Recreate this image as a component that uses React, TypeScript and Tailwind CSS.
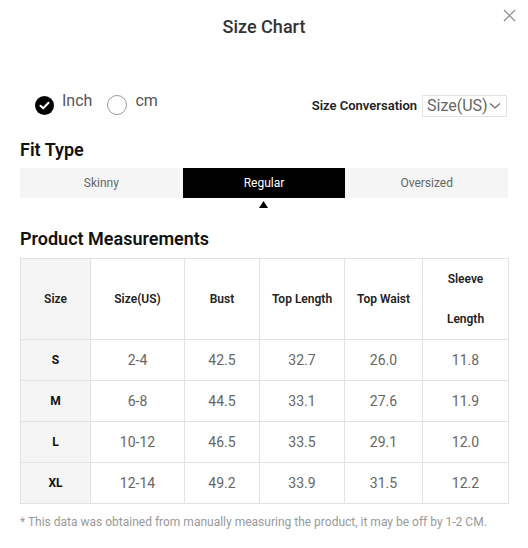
import React, { useState } from "react";

const rows = [
  { size: "S", us: "2-4", bust: "42.5", length: "32.7", waist: "26.0", sleeve: "11.8" },
  { size: "M", us: "6-8", bust: "44.5", length: "33.1", waist: "27.6", sleeve: "11.9" },
  { size: "L", us: "10-12", bust: "46.5", length: "33.5", waist: "29.1", sleeve: "12.0" },
  { size: "XL", us: "12-14", bust: "49.2", length: "33.9", waist: "31.5", sleeve: "12.2" },
];

const fitTypes = ["Skinny", "Regular", "Oversized"];

export default function App() {
  const [unit, setUnit] = useState<"inch" | "cm">("inch");
  const [fit, setFit] = useState("Regular");

  return (
    <div className="relative w-[528px] h-[548px] bg-white font-['Roboto',sans-serif] text-[#333]">
      {/* header */}
      <h1 className="pt-[15px] text-center text-[18px] leading-[24px] font-medium text-[#333]">
        Size Chart
      </h1>
      <button type="button" className="absolute right-[12px] top-[9px] text-[#888]">
        <svg width="13" height="13" viewBox="0 0 13 13" fill="none" stroke="currentColor" strokeWidth="1.2">
          <path d="M1 1L12 12M12 1L1 12" />
        </svg>
      </button>

      {/* unit + size conversation */}
      <div className="mt-[53px] h-[26px] flex items-center justify-between pl-[35px] pr-[21px]">
        <div className="flex items-center">
          <button type="button" className="flex items-center" onClick={() => setUnit("inch")}>
            {unit === "inch" ? <CheckedDot /> : <EmptyDot />}
            <span className="ml-[8px] -mt-[8px] text-[16px] leading-[16px] text-[#555]">Inch</span>
          </button>
          <button type="button" className="flex items-center ml-[15px]" onClick={() => setUnit("cm")}>
            {unit === "cm" ? <CheckedDot /> : <EmptyDot />}
            <span className="ml-[8px] -mt-[8px] text-[16px] leading-[16px] text-[#555]">cm</span>
          </button>
        </div>
        <div className="flex items-center mt-[2px]">
          <span className="text-[13px] font-semibold text-[#222]">Size Conversation</span>
          <div className="ml-[5px] h-[22px] w-[85px] border border-[#e3e3e3] flex items-center pl-[4px] text-[16px] text-[#666]">
            Size(US)
            <svg className="ml-[1px]" width="12" height="8" viewBox="0 0 12 8" fill="none" stroke="#666" strokeWidth="1.2">
              <path d="M1 1.5L6 6L11 1.5" />
            </svg>
          </div>
        </div>
      </div>

      {/* fit type */}
      <div className="px-[20px]">
        <h2 className="mt-[22px] text-[18px] leading-[20px] font-semibold text-[#111]">Fit Type</h2>
        <div className="mt-[8px] grid grid-cols-3 h-[30px] bg-[#f5f5f5]">
          {fitTypes.map((f) => (
            <button
              key={f}
              type="button"
              onClick={() => setFit(f)}
              className={
                f === fit
                  ? "bg-black text-white text-[12px]"
                  : "text-[#666] text-[12px]"
              }
            >
              {f}
            </button>
          ))}
        </div>
        <div className="grid grid-cols-3 mt-[3px] h-[7px]">
          {fitTypes.map((f) => (
            <div key={f} className="flex justify-center">
              {f === fit && (
                <svg width="9" height="7" viewBox="0 0 9 7">
                  <path d="M4.5 0L9 7H0Z" fill="#000" />
                </svg>
              )}
            </div>
          ))}
        </div>

        {/* measurements */}
        <h2 className="mt-[21px] text-[18px] leading-[20px] font-semibold text-[#111]">Product Measurements</h2>
        <table className="mt-[9px] w-[488px] border-collapse table-fixed text-center">
          <colgroup>
            <col className="w-[70px]" />
            <col className="w-[94px]" />
            <col className="w-[75px]" />
            <col className="w-[85px]" />
            <col className="w-[78px]" />
            <col className="w-[86px]" />
          </colgroup>
          <thead>
            <tr className="h-[81px] text-[12px] text-[#222]">
              <th className="border border-[#e2e2e2] bg-[#f5f5f5] font-semibold">Size</th>
              <th className="border border-[#e2e2e2] font-semibold">Size(US)</th>
              <th className="border border-[#e2e2e2] font-semibold">Bust</th>
              <th className="border border-[#e2e2e2] font-semibold">Top Length</th>
              <th className="border border-[#e2e2e2] font-semibold">Top Waist</th>
              <th className="border border-[#e2e2e2] font-semibold leading-[40px]">
                Sleeve
                <br />
                Length
              </th>
            </tr>
          </thead>
          <tbody>
            {rows.map((r) => (
              <tr key={r.size} className="h-[41px] text-[14px] text-[#666]">
                <td className="border border-[#e2e2e2] bg-[#f5f5f5] text-[12px] font-bold text-[#111]">{r.size}</td>
                <td className="border border-[#e2e2e2]">{r.us}</td>
                <td className="border border-[#e2e2e2]">{r.bust}</td>
                <td className="border border-[#e2e2e2]">{r.length}</td>
                <td className="border border-[#e2e2e2]">{r.waist}</td>
                <td className="border border-[#e2e2e2]">{r.sleeve}</td>
              </tr>
            ))}
          </tbody>
        </table>
        <p className="mt-[10px] text-[12px] leading-[16px] text-[#999]">
          * This data was obtained from manually measuring the product, it may be off by 1-2 CM.
        </p>
      </div>
    </div>
  );
}

function CheckedDot() {
  return (
    <svg width="19" height="19" viewBox="0 0 19 19">
      <circle cx="9.5" cy="9.5" r="9.5" fill="#000" />
      <path d="M5.5 9.8L8.2 12.3L13.5 6.8" fill="none" stroke="#fff" strokeWidth="2" strokeLinecap="round" strokeLinejoin="round" />
    </svg>
  );
}

function EmptyDot() {
  return <span className="block w-[20px] h-[20px] rounded-full border border-[#999]" />;
}
